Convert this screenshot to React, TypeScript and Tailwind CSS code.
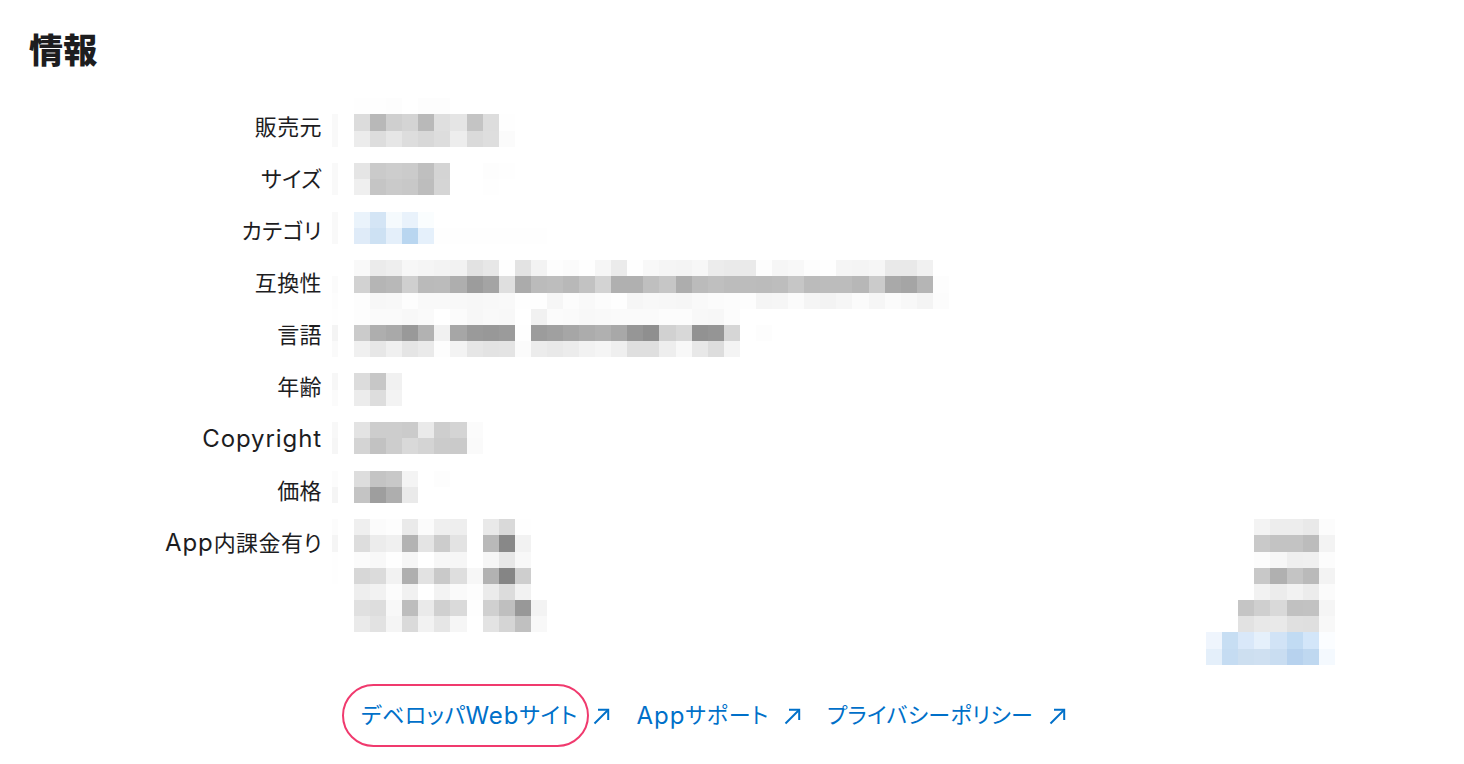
import type { ReactNode } from "react";

const fontStack = "font-['Inter','Noto_Sans_CJK_JP',sans-serif]";

function Latin({ children }: { children: ReactNode }) {
  return <span className="text-[24px] leading-none tracking-[0.9px]">{children}</span>;
}

const labels: ReactNode[] = [
  "販売元",
  "サイズ",
  "カテゴリ",
  "互換性",
  "言語",
  "年齢",
  <Latin>Copyright</Latin>,
  "価格",
  <>
    <Latin>App</Latin>内課金有り
  </>,
];

// blurred values, one string per 16px row of tiles
const side = (left: string, at: number, right: string) => {
  const cells = left.split(" ");
  while (cells.length < at) cells.push("ff");
  return [...cells, ...right.split(" ")].join(" ");
};

const mosaic = [
  "fe fe fd ff fd fd",
  "dc b8 cf d4 b9 df e5 c4 dd fe",
  "ec dd e6 dd d8 dd ed da de fb",
  "ff",
  "e5 ca cd cb bf d4 ff ff fd fe",
  "ef c5 ca c8 bd d5 ff ff fe",
  "ff",
  "eaf3fb d4e5f5 f5fafd e9f2fb fafdfe",
  "dfebf8 cde1f3 e4effa b9d6f0 e5f0fb fe fe fe fe fe fe fe",
  "ff",
  "f9 eb ee f7 f5 f3 f2 e2 e7 fe e3 f3 fd fb fe f6 eb fe f8 f5 f4 f7 ec ea ea fd f6 f8 fd fe f5 f4 f6 e9 e9 f1",
  "d2 b5 b8 cf ba bb ae 9c a4 df ab bb bd b8 c2 d3 b0 b0 bf c6 ad bb bf bc bc bb bd c6 bb bc bc b7 cb a9 a5 b5 fd",
  "fd f7 f8 fd f9 f9 f8 f7 f8 f9 fe fe f6 fc f9 fc fe f6 f8 f7 f6 f9 fb fc fd f5 f6 fb f5 f3 f6 fb f6 fb f8 f4 fc",
  "fd fa fa f8 fa ff fb f7 f9 f8 ff f1 fb fa f8 f9 fa fa fa fc fc f8 f7 fc",
  "cb ae a9 99 b2 f1 a6 9a 98 9b fe 9c a0 a6 ac b0 a8 96 8f d1 d8 92 95 d6 ff fd",
  "f0 e7 f0 e5 ea fd f3 e6 e3 e4 fb ec e9 ec f2 f5 ef df df ee f8 e8 dd f4",
  "ff",
  "dc c7 f1",
  "ec dd f3",
  "ff",
  "e3 cd cd cb ea ce d4 fb",
  "d4 c2 cd d9 d4 cb ca fa",
  "ff",
  "dd c4 c8 f4 ff fd",
  "c4 9e ae ea",
  "ff",
  side("ef fb fd ea fb ef ee ff e9 d9 fe", 56, "f3 ed ed e9 fc"),
  side("dd ec f0 b3 e4 cc e3 ff b9 88 f2", 56, "c9 c3 c3 bc f3"),
  side("fb f8 fe f6 ff f7 f6 ff f6 e7 f8", 56, "fc f7 ef f0 fc"),
  side("d7 db f2 af e2 c9 de f7 b2 85 ce", 56, "c8 b0 c4 ba f3"),
  side("ee f2 fc f1 ff f3 fa fd eb dc f2", 56, "f2 ec f2 ec fb"),
  side("e0 dd f8 bd ea d0 da fe d0 bf 98 f3", 55, "c5 cf d9 c1 c2 f5"),
  side("ea e2 f5 da f2 e6 f6 ff e3 d5 c0 f8", 55, "e2 e8 e9 e0 df f8"),
  side("ff", 53, "eff5fd c7def3 d9e8f9 e5f0fb d1e3f6 c1dbf3 d3e6f9 fbfdff"),
  side("ff", 53, "e4effa c5dcf2 cddff0 cfe0f1 c9ddf1 b7d2ee bfd8f0 f4f9fe"),
];

// faint strip left of the tiles, by row index
const strip: Record<number, string> = {
  1: "f9", 2: "f9", 4: "f9", 5: "f9", 7: "f9", 8: "f9",
  11: "fb", 12: "fd", 13: "fe", 14: "f4", 15: "fa",
  17: "f7", 18: "fb", 20: "f8", 21: "f6", 23: "fc", 24: "f5",
  26: "fc", 27: "f5", 28: "fe", 29: "fe",
};

function tile(c: string) {
  return c.length === 2 ? `#${c}${c}${c}` : `#${c}`;
}

function LinkArrow() {
  return (
    <svg width="18" height="18" viewBox="0 0 18 18" fill="none" stroke="#0070c9" strokeWidth="2" className="shrink-0">
      <path d="M1.5 16.5 15 3" />
      <path d="M5 2.8h10.2V13" />
    </svg>
  );
}

export default function App() {
  return (
    <div className={`h-[764px] overflow-hidden bg-white text-[#1d1d1f] [font-feature-settings:'palt'] ${fontStack}`}>
      <h1 className="flex h-[98px] items-center pl-[29px] pt-[3px] text-[34px] font-black leading-none tracking-[0.3px]">情報</h1>

      <div className="flex">
        {/* labels */}
        <dl className="w-[322px] shrink-0 pt-[3px] text-right text-[22px] tracking-[0.4px]">
          {labels.map((label, i) => (
            <dt key={i} className="flex h-[52px] items-center justify-end">
              {label}
            </dt>
          ))}
        </dl>

        {/* blurred values */}
        <div className="flex flex-col pl-[10px] pt-[0.3px]">
          {mosaic.map((row, i) => (
            <div key={i} className="flex h-[16.2px]">
              <div className="h-full w-[6px]" style={strip[i] ? { backgroundColor: tile(strip[i]) } : undefined} />
              <div className="h-full w-4" />
              {row.split(" ").map((c, j) => (
                <div key={j} className="h-full w-[16.09px]" style={{ backgroundColor: tile(c) }} />
              ))}
            </div>
          ))}
        </div>
      </div>

      {/* links */}
      <div className="mt-[21px] flex h-[60px] items-center pl-[361px] text-[22px] tracking-[0.4px] text-[#0070c9]">
        <a className="relative flex items-center">
          デベロッパ<Latin>Web</Latin>サイト
          <span className="absolute inset-y-[-15px] -left-[19px] -right-[11px] rounded-full border-2 border-[#f03a6e]" />
        </a>
        <span className="ml-[15px]">
          <LinkArrow />
        </span>
        <a className="ml-[26px] flex items-center tracking-[0.8px]">
          <Latin>App</Latin>サポート
        </a>
        <span className="ml-[15px]">
          <LinkArrow />
        </span>
        <a className="ml-[25px]">プライバシーポリシー</a>
        <span className="ml-[16px]">
          <LinkArrow />
        </span>
      </div>
    </div>
  );
}
